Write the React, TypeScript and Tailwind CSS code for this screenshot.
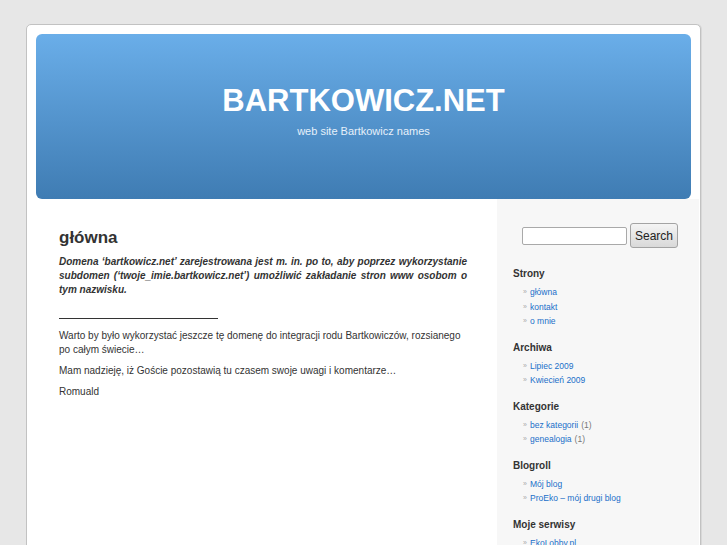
import React from "react";

const font = { fontFamily: '"Liberation Sans", Arial, sans-serif' };

const sections: { title: string; items: { label: string; count?: string }[] }[] = [
  { title: "Strony", items: [{ label: "główna" }, { label: "kontakt" }, { label: "o mnie" }] },
  { title: "Archiwa", items: [{ label: "Lipiec 2009" }, { label: "Kwiecień 2009" }] },
  {
    title: "Kategorie",
    items: [
      { label: "bez kategorii", count: "(1)" },
      { label: "genealogia", count: "(1)" },
    ],
  },
  { title: "Blogroll", items: [{ label: "Mój blog" }, { label: "ProEko – mój drugi blog" }] },
  { title: "Moje serwisy", items: [{ label: "EkoLobby.pl" }, { label: "ProEko.pl" }] },
];

function Sidebar() {
  return (
    <div className="w-[202px] shrink-0 bg-[#f7f7f7] pt-[24px]">
      <div className="flex items-center pl-[25px] gap-[3px]">
        <input
          type="text"
          className="w-[105px] h-[18px] border border-[#a9a9a9] rounded-[2px] bg-white"
        />
        <button
          className="w-[48px] h-[25px] border border-[#a3a3a3] rounded-[3px] bg-gradient-to-b from-[#f4f4f4] to-[#d9d9d9] text-[12px] text-[#222] leading-none"
          style={font}
        >
          Search
        </button>
      </div>
      <div className="mt-[19px]">
        {sections.map((s) => (
          <div key={s.title} className="mb-[12px]">
            <h3 className="pl-[16px] text-[10px] leading-[14px] font-bold text-[#333] mb-[4px]">
              {s.title}
            </h3>
            <ul className="pl-[26px]">
              {s.items.map((it) => (
                <li key={it.label} className="flex items-center leading-[14.5px] text-[8.5px]">
                  <span className="text-[#aaa] text-[7px] w-[7px]">»</span>
                  <span className="text-[#1a6fc9]">{it.label}</span>
                  {it.count && <span className="text-[#777] ml-[3px]">{it.count}</span>}
                </li>
              ))}
            </ul>
          </div>
        ))}
      </div>
    </div>
  );
}

function Main() {
  return (
    <div className="w-[470px] shrink-0 bg-white pl-[32px] pr-[30px] pt-[29px] text-[#333]">
      <h2 className="text-[17px] leading-[20px] font-bold">główna</h2>
      <p className="mt-[7px] text-[10px] leading-[14px] font-bold italic text-justify">
        Domena ‘bartkowicz.net’ zarejestrowana jest m. in. po to, aby poprzez wykorzystanie
        subdomen (‘twoje_imie.bartkowicz.net’) umożliwić zakładanie stron www osobom o tym
        nazwisku.
      </p>
      <div className="mt-[21px] w-[159px] h-px bg-[#333]" />
      <p className="mt-[10px] text-[10px] leading-[14px]">
        Warto by było wykorzystać jeszcze tę domenę do integracji rodu Bartkowiczów, rozsianego
        po całym świecie…
      </p>
      <p className="mt-[7px] text-[10px] leading-[14px]">
        Mam nadzieję, iż Goście pozostawią tu czasem swoje uwagi i komentarze…
      </p>
      <p className="mt-[7px] text-[10px] leading-[14px]">Romuald</p>
    </div>
  );
}

export default function App() {
  return (
    <div className="min-h-[545px] bg-[#e7e7e7] pt-[24px] overflow-hidden" style={font}>
      <div className="ml-[26px] w-[675px] h-[560px] bg-white border border-[#c2c2c2] rounded-t-[5px] shadow-[1px_0_0_#d8d8d8]">
        <div className="px-[9px] pt-[9px]">
          <div className="h-[165px] rounded-[6px] bg-gradient-to-b from-[#6aaee9] to-[#3f7cb3] pt-[51px] text-center">
            <h1 className="text-[31px] leading-none font-bold text-white">BARTKOWICZ.NET</h1>
            <div className="mt-[10px] text-[11px] leading-none text-[#e6f0fa]">
              web site Bartkowicz names
            </div>
          </div>
        </div>
        <div className="flex">
          <Main />
          <Sidebar />
        </div>
      </div>
    </div>
  );
}
